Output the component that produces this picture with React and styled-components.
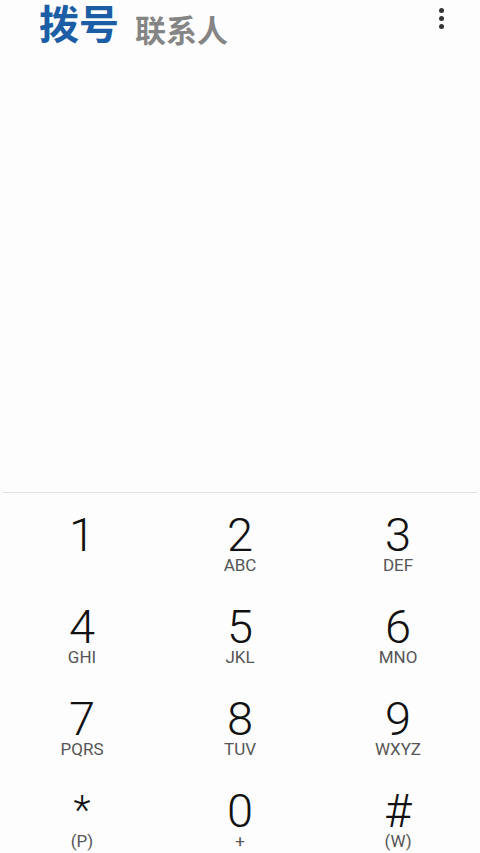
import React from "react"
import styled, { createGlobalStyle } from "styled-components"

const GlobalStyle = createGlobalStyle`
  html, body {
    margin: 0;
    padding: 0;
    background: #fdfdfd;
  }
  body {
    font-family: Roboto, "Noto Sans", "Noto Sans CJK SC", sans-serif;
  }
`

const Screen = styled.div`
  width: 480px;
  height: 853px;
  display: flex;
  flex-direction: column;
  overflow: hidden;
  background: #fdfdfd;
`

const Header = styled.div`
  display: flex;
  align-items: flex-start;
  padding: 0 0 0 39px;
  height: 492px;
  flex-shrink: 0;
`

const Tab = styled.div`
  font-family: "Noto Sans CJK SC", sans-serif;
  font-weight: 700;
  font-size: ${p => (p.active ? "40px" : "31px")};
  line-height: 1.1;
  color: ${p => (p.active ? "#1b5ea6" : "#858585")};
  margin-top: ${p => (p.active ? "0" : "12px")};
  margin-right: 16px;
`

const MenuButton = styled.div`
  margin-left: auto;
  margin-right: 36px;
  margin-top: 8px;
  display: flex;
  flex-direction: column;
  gap: 3px;
`

const Dot = styled.span`
  width: 5px;
  height: 5px;
  border-radius: 50%;
  background: #333;
`

const Divider = styled.div`
  height: 1px;
  margin: 0 3px;
  background: #e2e2e2;
  flex-shrink: 0;
`

const Keypad = styled.div`
  flex: 1;
  display: grid;
  grid-template-columns: repeat(3, 1fr);
  grid-template-rows: repeat(3, 92px) 1fr;
  padding: 0 3px;
`

const Key = styled.div`
  display: flex;
  flex-direction: column;
  align-items: center;
  padding-top: 20px;
`

const Digit = styled.div`
  font-size: ${p => (p.small ? "40px" : "47px")};
  font-weight: 300;
  color: #111;
  line-height: 44px;
  height: 44px;
`

const Letters = styled.div`
  font-size: 17px;
  color: #555;
  line-height: 17px;
`

const keys = [
  ["1", ""],
  ["2", "ABC"],
  ["3", "DEF"],
  ["4", "GHI"],
  ["5", "JKL"],
  ["6", "MNO"],
  ["7", "PQRS"],
  ["8", "TUV"],
  ["9", "WXYZ"],
  ["*", "(P)"],
  ["0", "+"],
  ["#", "(W)"]
]

export default function App() {
  return (
    <Screen>
      <GlobalStyle />
      <Header>
        <Tab active>拨号</Tab>
        <Tab>联系人</Tab>
        <MenuButton>
          <Dot />
          <Dot />
          <Dot />
        </MenuButton>
      </Header>
      <Divider />
      <Keypad>
        {keys.map(([d, l]) => (
          <Key key={d}>
            <Digit small={d === "*"}>{d}</Digit>
            <Letters>{l}</Letters>
          </Key>
        ))}
      </Keypad>
    </Screen>
  )
}
